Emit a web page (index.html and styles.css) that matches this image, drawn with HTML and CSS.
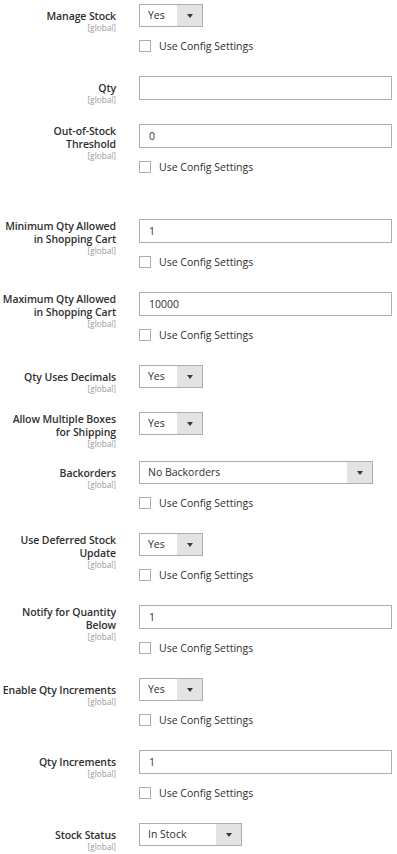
FILE: index.html
```html
<!DOCTYPE html>
<html lang="en">
<head>
    <meta charset="UTF-8">
    <meta name="viewport" content="width=device-width, initial-scale=1.0">
    <title>Advanced Inventory</title>
    <link rel="stylesheet" href="styles.css">
</head>
<body>
    <div class="fieldset">
        <div class="field">
            <label class="field-label"><span>Manage Stock</span><em>[global]</em></label>
            <div class="field-control">
                <div class="select select-small"><span>Yes</span><i class="select-btn"></i></div>
                <label class="use-config"><span class="checkbox"></span>Use Config Settings</label>
            </div>
        </div>

        <div class="field">
            <label class="field-label"><span>Qty</span><em>[global]</em></label>
            <div class="field-control">
                <div class="input"></div>
            </div>
        </div>

        <div class="field field-spaced">
            <label class="field-label multi"><span>Out-of-Stock Threshold</span><em>[global]</em></label>
            <div class="field-control">
                <div class="input">0</div>
                <label class="use-config"><span class="checkbox"></span>Use Config Settings</label>
            </div>
        </div>

        <div class="field">
            <label class="field-label multi"><span>Minimum Qty Allowed in Shopping Cart</span><em>[global]</em></label>
            <div class="field-control">
                <div class="input">1</div>
                <label class="use-config"><span class="checkbox"></span>Use Config Settings</label>
            </div>
        </div>

        <div class="field">
            <label class="field-label multi"><span>Maximum Qty Allowed in Shopping Cart</span><em>[global]</em></label>
            <div class="field-control">
                <div class="input">10000</div>
                <label class="use-config"><span class="checkbox"></span>Use Config Settings</label>
            </div>
        </div>

        <div class="field">
            <label class="field-label"><span>Qty Uses Decimals</span><em>[global]</em></label>
            <div class="field-control">
                <div class="select select-small"><span>Yes</span><i class="select-btn"></i></div>
            </div>
        </div>

        <div class="field">
            <label class="field-label multi"><span>Allow Multiple Boxes for Shipping</span><em>[global]</em></label>
            <div class="field-control">
                <div class="select select-small"><span>Yes</span><i class="select-btn"></i></div>
            </div>
        </div>

        <div class="field">
            <label class="field-label"><span>Backorders</span><em>[global]</em></label>
            <div class="field-control">
                <div class="select select-wide"><span>No Backorders</span><i class="select-btn"></i></div>
                <label class="use-config"><span class="checkbox"></span>Use Config Settings</label>
            </div>
        </div>

        <div class="field">
            <label class="field-label multi"><span>Use Deferred Stock Update</span><em>[global]</em></label>
            <div class="field-control">
                <div class="select select-small"><span>Yes</span><i class="select-btn"></i></div>
                <label class="use-config"><span class="checkbox"></span>Use Config Settings</label>
            </div>
        </div>

        <div class="field">
            <label class="field-label multi"><span>Notify for Quantity Below</span><em>[global]</em></label>
            <div class="field-control">
                <div class="input">1</div>
                <label class="use-config"><span class="checkbox"></span>Use Config Settings</label>
            </div>
        </div>

        <div class="field">
            <label class="field-label"><span>Enable Qty Increments</span><em>[global]</em></label>
            <div class="field-control">
                <div class="select select-small"><span>Yes</span><i class="select-btn"></i></div>
                <label class="use-config"><span class="checkbox"></span>Use Config Settings</label>
            </div>
        </div>

        <div class="field">
            <label class="field-label"><span>Qty Increments</span><em>[global]</em></label>
            <div class="field-control">
                <div class="input">1</div>
                <label class="use-config"><span class="checkbox"></span>Use Config Settings</label>
            </div>
        </div>

        <div class="field">
            <label class="field-label"><span>Stock Status</span><em>[global]</em></label>
            <div class="field-control">
                <div class="select select-medium"><span>In Stock</span><i class="select-btn"></i></div>
            </div>
        </div>
    </div>
</body>
</html>
```

FILE: styles.css
```css
body {
    margin: 0;
    padding: 4px 0 0;
    background: #fff;
    font-family: 'Open Sans', 'Liberation Sans', sans-serif;
    color: #303030;
}
.fieldset {
    width: 397px;
}
.field {
    display: flex;
    align-items: flex-start;
    margin-bottom: 24px;
}
.field-spaced {
    margin-bottom: 46px;
}
.field-label {
    width: 114px;
    padding: 5.5px 0 0 2px;
    margin: 0 23px -12px 0;
    flex-shrink: 0;
    text-align: right;
    display: flex;
    flex-direction: column;
    align-items: flex-end;
}
.field-label.multi {
    padding-top: 1px;
}
.field-label span {
    font-size: 10.5px;
    font-weight: 600;
    line-height: 1.2;
    letter-spacing: -0.1px;
}
.field-label em {
    font-style: normal;
    font-size: 8.2px;
    line-height: 11px;
    color: #999;
}
.field-control {
    flex: 1;
    padding-right: 5px;
}
.input {
    height: 24px;
    box-sizing: border-box;
    border: 1px solid #adadad;
    padding: 0 9px;
    font-size: 10.5px;
    line-height: 22px;
}
.select {
    height: 23px;
    box-sizing: border-box;
    border: 1px solid #adadad;
    display: flex;
    font-size: 10.5px;
    line-height: 21px;
}
.select span {
    flex: 1;
    padding-left: 8px;
}
.select-btn {
    width: 24px;
    background: #e3e3e3;
    border-left: 1px solid #e3e3e3;
    position: relative;
}
.select-btn:after {
    content: '';
    position: absolute;
    left: 50%;
    top: 50%;
    margin: -2px 0 0 -3px;
    border-left: 3px solid transparent;
    border-right: 3px solid transparent;
    border-top: 4px solid #41362f;
}
.select-small {
    width: 64px;
}
.select-wide {
    width: 234px;
}
.select-medium {
    width: 103px;
}
.use-config {
    display: flex;
    align-items: center;
    height: 12px;
    margin-top: 13px;
    font-size: 10.5px;
    color: #303030;
}
.checkbox {
    width: 12px;
    height: 12px;
    box-sizing: border-box;
    border: 1px solid #adadad;
    background: #fff;
    margin-right: 8px;
}
```
